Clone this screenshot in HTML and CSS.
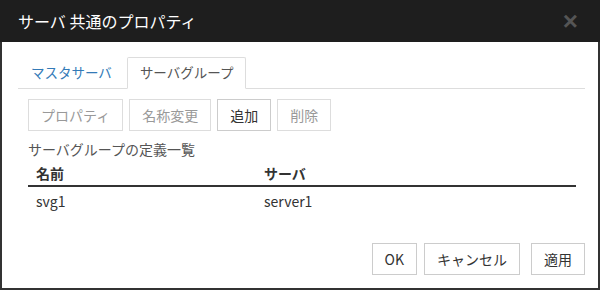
FILE: index.html
```html
<!DOCTYPE html>
<html lang="ja">
<head>
  <meta charset="UTF-8" />
  <title>サーバ 共通のプロパティ</title>
  <link rel="stylesheet" href="styles.css">
</head>
<body>
  <div class="dialog">
    <header class="dialog-header">
      <h1>サーバ 共通のプロパティ</h1>
      <span class="close">&times;</span>
    </header>

    <section class="dialog-body">
      <ul class="tabs">
        <li class="tab"><a href="#">マスタサーバ</a></li>
        <li class="tab active"><a href="#">サーバグループ</a></li>
      </ul>

      <div class="toolbar">
        <button disabled>プロパティ</button>
        <button disabled>名称変更</button>
        <button>追加</button>
        <button disabled>削除</button>
      </div>

      <p class="caption">サーバグループの定義一覧</p>
      <table class="list">
        <tr>
          <th class="col-name">名前</th>
          <th>サーバ</th>
        </tr>
        <tr>
          <td>svg1</td>
          <td>server1</td>
        </tr>
      </table>
    </section>

    <footer class="dialog-footer">
      <button>OK</button>
      <button>キャンセル</button>
      <button class="apply">適用</button>
    </footer>
  </div>
</body>
</html>
```

FILE: styles.css
```css
body {
  margin: 0;
  padding: 0;
  background-color: #fff;
  font-family: "Noto Sans CJK JP", "Open Sans", sans-serif;
  font-size: 14px;
  color: #333;
}
.dialog {
  width: 600px;
  height: 290px;
  box-sizing: border-box;
  border: 2px solid #333;
  border-top: none;
  display: flex;
  flex-direction: column;
}
.dialog-header {
  background-color: #1e1e1e;
  height: 42px;
  margin: 0 -2px;
  padding: 0 22px 0 18px;
  display: flex;
  align-items: center;
  justify-content: space-between;
}
.dialog-header h1 {
  margin: 0;
  font-size: 16px;
  font-weight: normal;
  color: #fff;
}
.close {
  color: #555;
  font-size: 26px;
  font-weight: bold;
  font-family: "Liberation Sans", Arial, sans-serif;
  line-height: 1;
}
.dialog-body {
  padding: 15px 13px 0 16px;
}

.tabs {
  list-style: none;
  margin: 0;
  padding: 0;
  display: flex;
  border-bottom: 1px solid #ddd;
}
.tab a {
  display: block;
  padding: 4px 12px 6px;
  margin-bottom: -1px;
  border: 1px solid transparent;
  border-radius: 2px 2px 0 0;
  color: #337ab7;
  text-decoration: none;
  font-size: 13.5px;
  line-height: 20px;
}
.tab.active a {
  color: #555;
  background-color: #fff;
  border-color: #ddd #ddd #fff;
}
.tab + .tab {
  margin-left: 2px;
}

.toolbar {
  display: flex;
  gap: 6px;
  margin: 10px 0 0 10px;
}
button {
  font-family: inherit;
  font-size: 14px;
  color: #333;
  background-color: #fff;
  border: 1px solid #ccc;
  border-radius: 0;
  padding: 5px 12px;
  line-height: 20px;
}
button:disabled {
  color: #999;
  border-color: #ddd;
}

.caption {
  margin: 8px 0 0 10px;
  color: #555;
  line-height: 20px;
}
.list {
  width: 548px;
  margin-left: 10px;
  border-collapse: collapse;
}
.list th {
  text-align: left;
  font-weight: bold;
  padding: 4px 8px 2px;
  border-bottom: 2px solid #333;
  line-height: 20px;
}
.list td {
  padding: 4px 8px;
  line-height: 20px;
}
.col-name {
  width: 212px;
}

.dialog-footer {
  margin-top: auto;
  display: flex;
  justify-content: flex-end;
  gap: 7px;
  padding: 0 13px 13px 0;
}
.dialog-footer .apply {
  margin-left: 4px;
}
```
